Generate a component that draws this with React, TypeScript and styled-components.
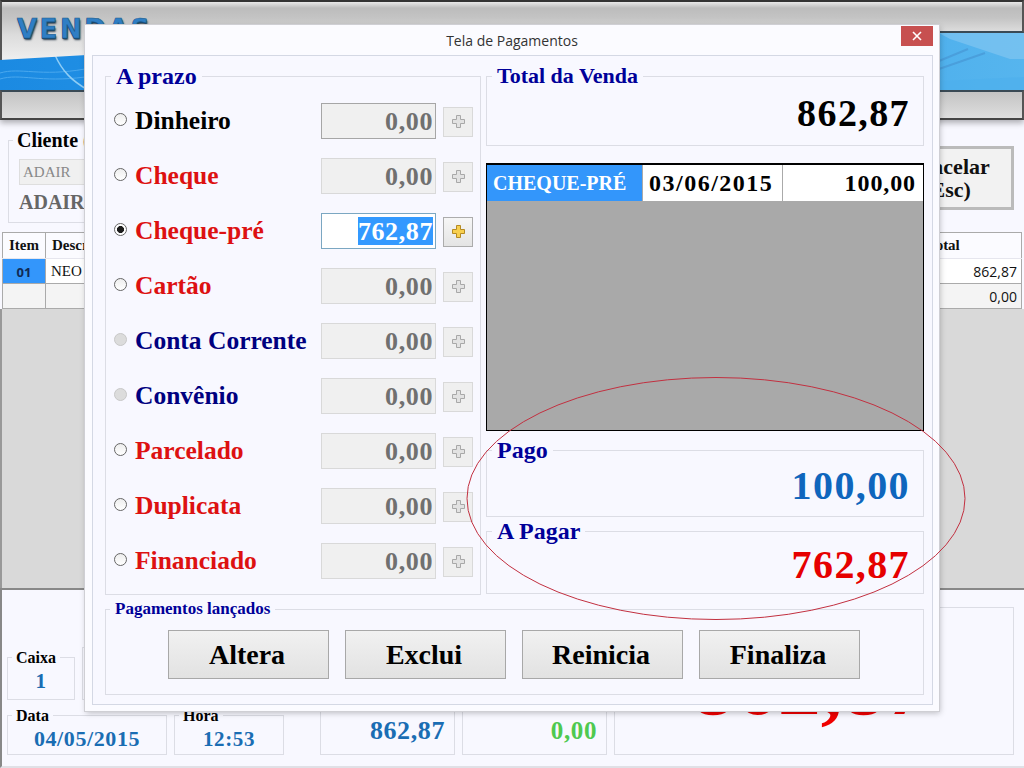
import React from "react";
import styled, { createGlobalStyle } from "styled-components";

const SERIF = `"Liberation Serif", "Times New Roman", serif`;
const SANS = `"Open Sans", "Noto Sans", sans-serif`;

const Global = createGlobalStyle`
  html, body { margin: 0; padding: 0; background: #f8f8ff; }
  * { box-sizing: border-box; }
  fieldset { margin: 0; min-width: 0; }
`;

const Screen = styled.div`
  position: relative;
  width: 1024px;
  height: 768px;
  overflow: hidden;
  display: flex;
  flex-direction: column;
  background: #f8f8ff;
  font-family: ${SERIF};
`;

/* ---------- background window ---------- */
const Header = styled.header`
  position: relative;
  flex: 0 0 120px;
  display: flex;
  flex-direction: column;
`;
const TopBar = styled.div`
  flex: 0 0 33px;
  background: linear-gradient(#e8e8e8 0, #bcbcbc 6px, #c4c4c4 16px, #dcdcdc 100%);
  border-top: 2px solid #333;
  border-bottom: 2px solid #3a4a55;
  border-right: 2px solid #555;
`;
const Banner = styled.div`
  position: relative;
  flex: 0 0 57px;
  background: linear-gradient(90deg, #1b8ae2 0, #2d9be8 40%, #56b5ee 100%);
  overflow: hidden;
`;
const Waves = styled.svg`
  display: block;
  width: 100%;
  height: 100%;
`;
const LogoPlate = styled.div`
  position: absolute;
  left: 0;
  top: 0;
  width: 420px;
  height: 60px;
  background: linear-gradient(#e8e8e8 0, #bcbcbc 6px, #c4c4c4 16px, #dcdcdc 33px, #efefef 100%);
  border-top: 2px solid #333;
  border-left: 2px solid #555;
  clip-path: polygon(0 0, 100% 0, 100% 60%, 0 100%);
`;
const Logo = styled.div`
  position: absolute;
  left: 15px;
  top: 12px;
  font-family: "DejaVu Sans", sans-serif;
  font-weight: 700;
  font-size: 26px;
  line-height: 30px;
  letter-spacing: 2.5px;
  color: #2f7ec4;
  -webkit-text-stroke: 0.6px #1e5a8c;
  text-shadow: 0 1px 0 #16496f, 1px 2px 2px #2a3c4c;
`;
const NavBar = styled.div`
  flex: 0 0 30px;
  background: linear-gradient(#c4c4c4, #dedede);
  border-top: 2px solid #3a4a55;
  border-bottom: 2px solid #444;
  border-left: 2px solid #555;
  border-right: 2px solid #555;
  box-shadow: 0 3px 6px rgba(0, 0, 0, 0.3);
`;
const ClientArea = styled.section`
  flex: 0 0 112px;
  display: flex;
  align-items: flex-start;
  padding: 8px 10px 0 8px;
`;
const ClientBox = styled.fieldset`
  width: 700px;
  height: 95px;
  padding: 0;
  border: 1px solid #dcdde5;
`;
const ClientFields = styled.div`
  padding: 6px 10px 0;
`;
const SmallLegend = styled.legend<{ $size?: number }>`
  margin-left: 4px;
  padding: 0 4px;
  font-size: ${(p) => p.$size ?? 16}px;
  font-weight: 700;
  line-height: ${(p) => (p.$size ?? 16) + 5}px;
  color: #000;
`;
const ClientInput = styled.div`
  width: 220px;
  height: 26px;
  padding-left: 3px;
  background: #f0f0f0;
  border: 1px solid #dedede;
  color: #888;
  font-size: 15px;
  line-height: 24px;
`;
const ClientName = styled.div`
  margin-top: 5px;
  color: #666;
  font-size: 20px;
  font-weight: 700;
  line-height: 24px;
`;
const CancelButton = styled.button`
  margin: 18px 0 0 auto;
  width: 134px;
  height: 64px;
  padding: 0;
  background: #f2f2f2;
  border: 3px solid #bbb;
  font-family: ${SERIF};
  font-size: 22px;
  font-weight: 700;
  line-height: 23px;
  color: #111;
`;
const ItemTable = styled.table`
  flex: 0 0 auto;
  width: 1020px;
  margin-left: 2px;
  border-collapse: collapse;
  table-layout: fixed;
`;
const HeadCell = styled.th<{ $w?: number }>`
  width: ${(p) => (p.$w ? `${p.$w}px` : "auto")};
  height: 26px;
  padding: 0 6px;
  text-align: left;
  background: #fbfbff;
  border: 1px solid #aaa;
  border-bottom: 1px solid #e6e6ee;
  font-size: 15px;
  font-weight: 700;
  color: #111;
`;
const Cell = styled.td<{ $tone?: "blue" | "alt" | "plain"; $right?: boolean; $sans?: boolean }>`
  height: 25px;
  padding: 0 4px 0 5px;
  border: 1px solid #aaa;
  text-align: ${(p) => (p.$right ? "right" : "left")};
  background: ${(p) => (p.$tone === "blue" ? "#3396fb" : p.$tone === "alt" ? "#f4f4f4" : "#fff")};
  color: #111;
  font-family: ${(p) => (p.$sans ? SANS : SERIF)};
  font-size: ${(p) => (p.$sans ? 14 : 15)}px;
`;
const ItemNumber = styled(Cell)`
  padding: 1px 0 0;
  text-align: center;
  color: #102a55;
  font-family: ${SANS};
  font-size: 13px;
  font-weight: 700;
`;
const GrayArea = styled.div`
  flex: 1;
  background: #d9d9d9;
  border-left: 2px solid #999;
`;
const BottomPanel = styled.footer`
  flex: 0 0 180px;
  display: flex;
  align-items: flex-end;
  padding: 0 9px 11px 7px;
  border-top: 2px solid #888;
  border-left: 2px solid #888;
  border-bottom: 2px solid #e0e0e6;
  background: #f8f8ff;
`;
const BottomLeft = styled.div`
  width: 277px;
  margin-left: -2px;
  display: flex;
  flex-direction: column;
  gap: 5px;
`;
const InfoRow = styled.div`
  display: flex;
  gap: 7px;
`;
const InfoBox = styled.fieldset<{ $w: number; $h: number }>`
  width: ${(p) => p.$w}px;
  height: ${(p) => p.$h}px;
  padding: 0;
  border: 1px solid #dcdde5;
`;
const InfoValue = styled.div<{ $size: number; $color?: string; $align?: string }>`
  color: ${(p) => p.$color ?? "#1a6db3"};
  font-size: ${(p) => p.$size}px;
  font-weight: 700;
  line-height: 26px;
  text-align: ${(p) => p.$align ?? "center"};
  letter-spacing: 0.6px;
`;
const AmountBox = styled.div<{ $w: number; $pad: number }>`
  width: ${(p) => p.$w}px;
  height: 56px;
  margin-left: ${(p) => p.$pad}px;
  padding: 18px 9px 0 0;
  border: 1px solid #dcdde5;
`;
const BigBox = styled.div`
  width: 400px;
  height: 148px;
  margin-left: 7px;
  padding: 34px 8px 0 0;
  border: 1px solid #dcdde5;
  text-align: center;
`;
const BigValue = styled.div`
  color: #f00000;
  font-size: 86px;
  font-weight: 700;
  line-height: 86px;
`;

/* ---------- payment dialog ---------- */
const Dialog = styled.div`
  position: absolute;
  left: 85px;
  top: 25px;
  width: 854px;
  height: 686px;
  display: flex;
  flex-direction: column;
  background: #fbfbff;
  box-shadow: 0 0 0 1px #cfcfd4, 1px 2px 6px rgba(0, 0, 0, 0.25);
`;
const TitleBar = styled.div`
  flex: 0 0 30px;
  padding-top: 6px;
  text-align: center;
  font-family: ${SANS};
  font-size: 14px;
  line-height: 20px;
  color: #333;
`;
const CloseButton = styled.div`
  position: absolute;
  right: 6px;
  top: 1px;
  width: 32px;
  height: 20px;
  background: #c75050;
  color: #fff;
  display: flex;
  align-items: center;
  justify-content: center;
`;
const DialogBody = styled.div`
  flex: 0 0 650px;
  margin: 0 6px 0 7px;
  padding: 7px 8px 0 12px;
  display: flex;
  flex-direction: column;
  gap: 5px;
  background: #f8f8ff;
  border: 1px solid #d4d8e4;
`;
const Columns = styled.div`
  display: flex;
  gap: 5px;
  height: 532px;
`;
const Group = styled.fieldset<{ $h?: number; $top?: number }>`
  height: ${(p) => (p.$h ? `${p.$h}px` : "auto")};
  margin-top: ${(p) => p.$top ?? 0}px;
  padding: 0;
  border: 1px solid #dcdde5;
`;
const GroupLegend = styled.legend<{ $size?: number }>`
  margin-left: 5px;
  padding: 0 5px;
  color: #000099;
  font-size: ${(p) => p.$size ?? 24}px;
  font-weight: 700;
  line-height: 26px;
`;
const MethodGroup = styled(Group)`
  width: 376px;
`;
const MethodList = styled.div`
  padding: 4px 7px 0 8px;
`;
const Method = styled.div`
  height: 55px;
  display: flex;
  align-items: center;
`;
const Radio = styled.span<{ $on?: boolean; $off?: boolean }>`
  flex: 0 0 13px;
  height: 13px;
  margin-top: -3px;
  border-radius: 50%;
  border: 1px solid ${(p) => (p.$off ? "#c8c8c8" : "#666")};
  background: ${(p) =>
    p.$on
      ? "radial-gradient(circle, #1c1c1c 0 3.2px, #fff 3.8px)"
      : p.$off
        ? "#dcdcdc"
        : "linear-gradient(#eee, #fff)"};
`;
const MethodName = styled.span<{ $tone: "black" | "red" | "navy" }>`
  flex: 1;
  margin-left: 8px;
  padding-top: 1px;
  font-size: 25.5px;
  font-weight: 700;
  color: ${(p) => (p.$tone === "red" ? "#dd1111" : p.$tone === "navy" ? "#000080" : "#000")};
`;
const AmountField = styled.div<{ $active?: boolean; $strong?: boolean }>`
  flex: 0 0 115px;
  height: 36px;
  padding-right: 2px;
  text-align: right;
  background: ${(p) => (p.$active ? "#fff" : "#f0f0f0")};
  border: 1px solid ${(p) => (p.$active ? "#7ba7c2" : p.$strong ? "#a6a6a6" : "#d9d9d9")};
  color: #707070;
  font-size: 26px;
  font-weight: 700;
  line-height: 36px;
  letter-spacing: 0.6px;
`;
const Selected = styled.span`
  display: inline-block;
  height: 28px;
  margin-top: 3px;
  background: #3399ff;
  color: #fff;
  line-height: 29px;
  vertical-align: top;
`;
const PlusButton = styled.div<{ $active?: boolean }>`
  flex: 0 0 30px;
  height: 30px;
  margin: 2px 0 0 7px;
  display: flex;
  align-items: center;
  justify-content: center;
  background: ${(p) => (p.$active ? "linear-gradient(#f6f6f6, #e4e4e4)" : "#efefef")};
  border: 1px solid ${(p) => (p.$active ? "#acacac" : "#d9d9d9")};
`;
const RightColumn = styled.div`
  width: 438px;
  display: flex;
  flex-direction: column;
`;
const ValueArea = styled.div<{ $h: number; $color: string; $size: number }>`
  height: ${(p) => p.$h}px;
  padding-right: 13px;
  text-align: right;
  color: ${(p) => p.$color};
  font-size: ${(p) => p.$size}px;
  font-weight: 700;
  line-height: ${(p) => p.$h}px;
  letter-spacing: 1.4px;
`;
const PaymentGrid = styled.div`
  flex: 0 0 268px;
  margin: 17px 0 6px;
  background: #a9a9a9;
  border: 1px solid #000;
`;
const PaymentRow = styled.div`
  height: 36px;
  border-top: 1px solid #000;
  display: grid;
  grid-template-columns: 155px 140px 1fr;
  font-weight: 700;
  line-height: 36px;
`;
const PaymentCell = styled.div<{ $picked?: boolean; $right?: boolean; $space?: number }>`
  padding: 0 7px 0 6px;
  background: ${(p) => (p.$picked ? "#3396fb" : "#fff")};
  color: ${(p) => (p.$picked ? "#fff" : "#000")};
  font-size: ${(p) => (p.$picked ? 20 : 24)}px;
  text-align: ${(p) => (p.$right ? "right" : "left")};
  border-left: ${(p) => (p.$picked ? "0" : "1px solid #aaa")};
  letter-spacing: ${(p) => p.$space ?? 0}px;
`;
const ActionsGroup = styled(Group)`
  height: 95px;
`;
const ActionsLegend = styled.legend`
  margin-left: 4px;
  padding: 0 5px;
  color: #000099;
  font-size: 17px;
  font-weight: 700;
  line-height: 18px;
`;
const Actions = styled.div`
  display: flex;
  gap: 16px;
  padding: 12px 0 0 62px;
`;
const ActionButton = styled.button`
  width: 161px;
  height: 49px;
  padding: 0 3px 0 0;
  background: linear-gradient(#f1f1f1, #e2e2e2);
  border: 1px solid #a8a8a8;
  font-family: ${SERIF};
  font-size: 28px;
  font-weight: 700;
  color: #000;
`;
const Highlight = styled.svg`
  position: absolute;
  left: 460px;
  top: 370px;
  width: 512px;
  height: 256px;
  pointer-events: none;
`;

const PlusIcon = ({ active }: { active?: boolean }) => (
  <svg width="15" height="15" viewBox="0 0 15 15" aria-hidden>
    <path
      d="M5.5 1.5h4v4h4v4h-4v4h-4v-4h-4v-4h4z"
      fill={active ? "#f7cf4f" : "#e2e2e2"}
      stroke={active ? "#b58a22" : "#a8a8a8"}
      strokeWidth="1"
    />
  </svg>
);

type MethodData = {
  name: string;
  tone: "black" | "red" | "navy";
  value: string;
  active?: boolean;
  off?: boolean;
  strong?: boolean;
};

const methods: MethodData[] = [
  { name: "Dinheiro", tone: "black", value: "0,00", strong: true },
  { name: "Cheque", tone: "red", value: "0,00" },
  { name: "Cheque-pré", tone: "red", value: "762,87", active: true },
  { name: "Cartão", tone: "red", value: "0,00" },
  { name: "Conta Corrente", tone: "navy", value: "0,00", off: true },
  { name: "Convênio", tone: "navy", value: "0,00", off: true },
  { name: "Parcelado", tone: "red", value: "0,00" },
  { name: "Duplicata", tone: "red", value: "0,00" },
  { name: "Financiado", tone: "red", value: "0,00" },
];

export default function App() {
  return (
    <Screen>
      <Global />
      <Header>
        <TopBar />
        <Banner>
          <Waves viewBox="0 0 1024 57" preserveAspectRatio="none" aria-hidden>
            <path d="M0 40 C20 34 40 44 85 36" fill="none" stroke="#4aa8ee" strokeWidth="1" />
            <path d="M0 46 C20 40 40 50 85 44" fill="none" stroke="#4aa8ee" strokeWidth="1" />
            <path d="M55 22 C62 38 72 48 88 57" fill="none" stroke="#8fcdf5" strokeWidth="1.5" />
            <path d="M939 0 L1024 0 L1024 26 L1010 26 L950 6 Z" fill="#8ccbf2" opacity="0.55" />
            <path d="M939 28 L968 16 M939 36 L985 20" stroke="#4a9fdc" strokeWidth="2" fill="none" />
            <path d="M939 57 L1024 57 L1024 44 L939 48 Z" fill="#4dafec" opacity="0.6" />
          </Waves>
        </Banner>
        <NavBar />
        <LogoPlate>
          <Logo>VENDAS</Logo>
        </LogoPlate>
      </Header>

      <ClientArea>
        <ClientBox>
          <SmallLegend $size={20}>Cliente (</SmallLegend>
          <ClientFields>
            <ClientInput>ADAIR</ClientInput>
            <ClientName>ADAIR</ClientName>
          </ClientFields>
        </ClientBox>
        <CancelButton>
          Cancelar
          <br />
          (Esc)
        </CancelButton>
      </ClientArea>

      <ItemTable>
        <thead>
          <tr>
            <HeadCell $w={43}>Item</HeadCell>
            <HeadCell>Descrição</HeadCell>
            <HeadCell $w={101}>Total</HeadCell>
          </tr>
        </thead>
        <tbody>
          <tr>
            <ItemNumber $tone="blue">01</ItemNumber>
            <Cell>NEO</Cell>
            <Cell $right $sans>862,87</Cell>
          </tr>
          <tr>
            <Cell $tone="alt" />
            <Cell $tone="alt" />
            <Cell $tone="alt" $right $sans>0,00</Cell>
          </tr>
        </tbody>
      </ItemTable>
      <GrayArea />

      <BottomPanel>
        <BottomLeft>
          <InfoRow>
            <InfoBox $w={68} $h={53}>
              <SmallLegend>Caixa</SmallLegend>
              <InfoValue $size={21}>1</InfoValue>
            </InfoBox>
            <InfoBox $w={202} $h={53} />
          </InfoRow>
          <InfoRow>
            <InfoBox $w={160} $h={50}>
              <SmallLegend>Data</SmallLegend>
              <InfoValue $size={22}>04/05/2015</InfoValue>
            </InfoBox>
            <InfoBox $w={110} $h={50}>
              <SmallLegend>Hora</SmallLegend>
              <InfoValue $size={21}>12:53</InfoValue>
            </InfoBox>
          </InfoRow>
        </BottomLeft>
        <AmountBox $w={135} $pad={36}>
          <InfoValue $size={26} $align="right">862,87</InfoValue>
        </AmountBox>
        <AmountBox $w={145} $pad={7}>
          <InfoValue $size={25} $align="right" $color="#4fc94f">0,00</InfoValue>
        </AmountBox>
        <BigBox>
          <BigValue>862,87</BigValue>
        </BigBox>
      </BottomPanel>

      <Dialog>
        <TitleBar>Tela de Pagamentos</TitleBar>
        <CloseButton>
          <svg width="10" height="10" viewBox="0 0 10 10" aria-hidden>
            <path d="M1 1l8 8M9 1l-8 8" stroke="#fff" strokeWidth="1.6" />
          </svg>
        </CloseButton>
        <DialogBody>
          <Columns>
            <MethodGroup>
              <GroupLegend>A prazo</GroupLegend>
              <MethodList>
                {methods.map((m) => (
                  <Method key={m.name}>
                    <Radio $on={m.active} $off={m.off} />
                    <MethodName $tone={m.tone}>{m.name}</MethodName>
                    <AmountField $active={m.active} $strong={m.strong}>
                      {m.active ? <Selected>{m.value}</Selected> : m.value}
                    </AmountField>
                    <PlusButton $active={m.active}>
                      <PlusIcon active={m.active} />
                    </PlusButton>
                  </Method>
                ))}
              </MethodList>
            </MethodGroup>
            <RightColumn>
              <Group $h={83}>
                <GroupLegend $size={22}>Total da Venda</GroupLegend>
                <ValueArea $h={48} $color="#000" $size={38}>862,87</ValueArea>
              </Group>
              <PaymentGrid>
                <PaymentRow>
                  <PaymentCell $picked>CHEQUE-PRÉ</PaymentCell>
                  <PaymentCell $space={1.5}>03/06/2015</PaymentCell>
                  <PaymentCell $right $space={0.9}>100,00</PaymentCell>
                </PaymentRow>
              </PaymentGrid>
              <Group $h={80}>
                <GroupLegend>Pago</GroupLegend>
                <ValueArea $h={46} $color="#0f66bd" $size={40}>100,00</ValueArea>
              </Group>
              <Group $h={76} $top={1}>
                <GroupLegend>A Pagar</GroupLegend>
                <ValueArea $h={42} $color="#e60000" $size={40}>762,87</ValueArea>
              </Group>
            </RightColumn>
          </Columns>
          <ActionsGroup>
            <ActionsLegend>Pagamentos lançados</ActionsLegend>
            <Actions>
              <ActionButton>Altera</ActionButton>
              <ActionButton>Exclui</ActionButton>
              <ActionButton>Reinicia</ActionButton>
              <ActionButton>Finaliza</ActionButton>
            </Actions>
          </ActionsGroup>
        </DialogBody>
      </Dialog>

      <Highlight viewBox="0 0 512 256" aria-hidden>
        <ellipse cx="256" cy="128.5" rx="249" ry="121" fill="none" stroke="#c23040" strokeWidth="1" />
      </Highlight>
    </Screen>
  );
}
